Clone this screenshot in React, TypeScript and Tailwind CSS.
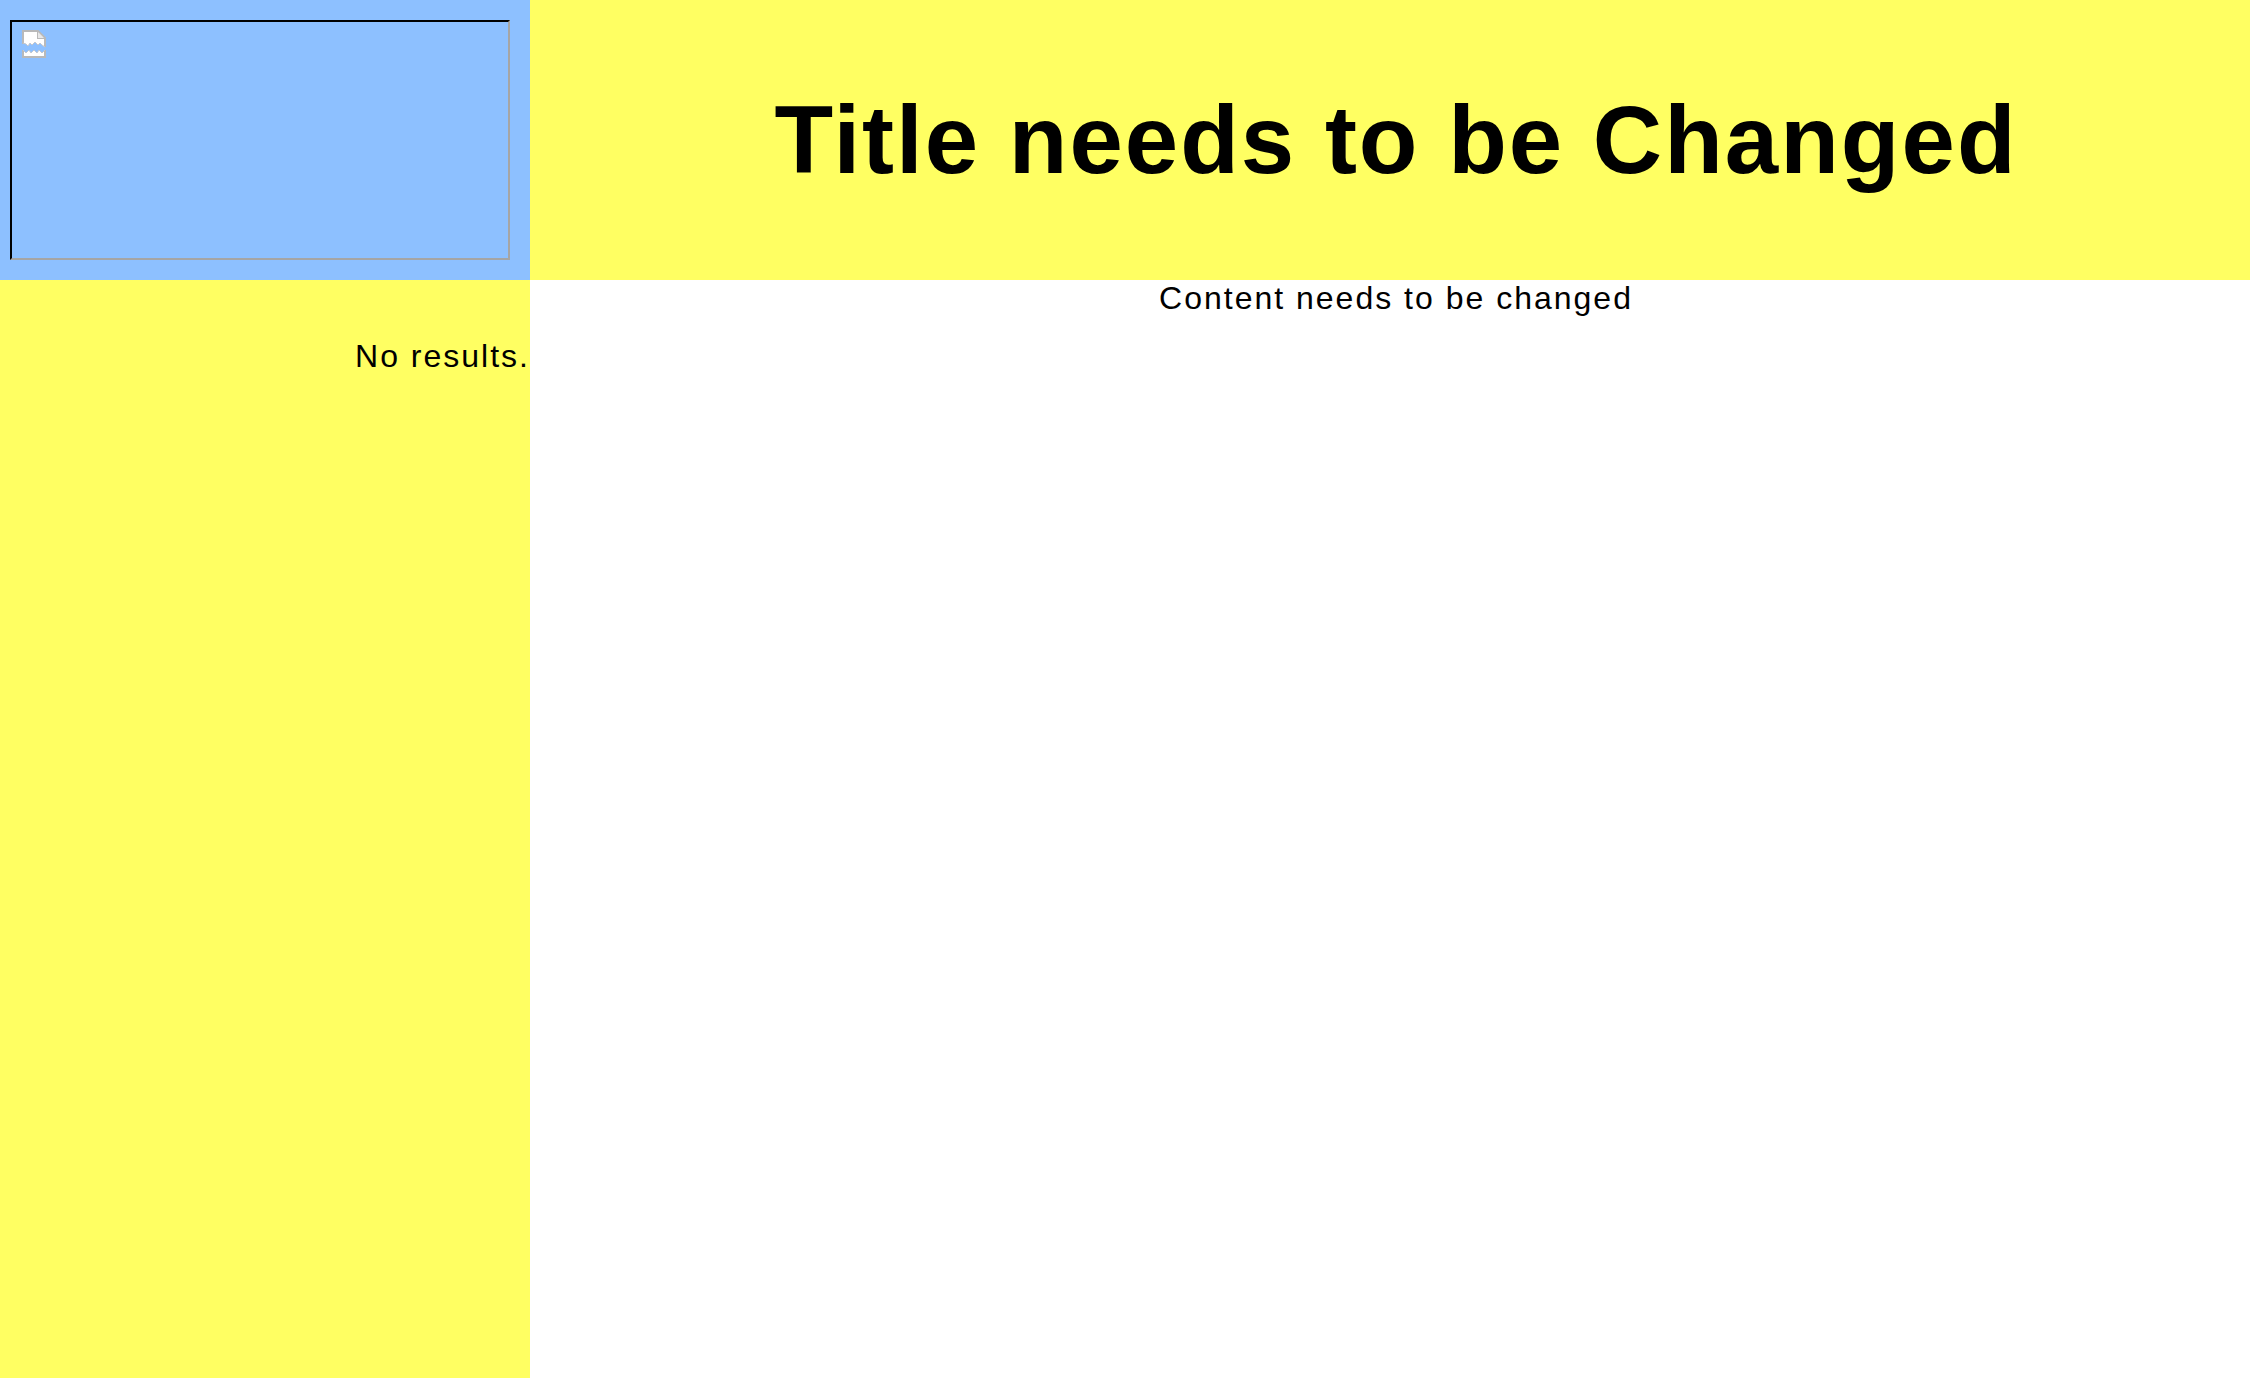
function BrokenImageIcon() {
  return (
    <svg className="h-7 w-6" viewBox="0 0 24 28" fill="none" role="img" aria-label="Image unavailable">
      <path d="M1 1H16L23 8V17L20 15L18 13L16 15L13 12L10 15L8 13L6 16L4 14L1 13Z" fill="#fff" />
      <path d="M1 14V1H16L23 8V17M16 1V8H23" stroke="#b9b9b9" strokeWidth="2" />
      <path d="M16 2L22 8H16Z" fill="#e8e8e8" />
      <path d="M1 13L4 14L6 16L8 13L10 15L13 12L16 15L18 13L20 15L23 17" stroke="#c3c8d0" strokeWidth="1" />
      <path d="M1 27V20L4 23L7 20L9 23L12 20L15 23L17 20L20 23L23 20V27Z" fill="#fff" />
      <path d="M1 20V27H23V20" stroke="#b9b9b9" strokeWidth="2" />
      <path d="M1 20L4 23L7 20L9 23L12 20L15 23L17 20L20 23L23 20" stroke="#c3c8d0" strokeWidth="1" />
    </svg>
  );
}

export default function App() {
  return (
    <div className="grid min-h-screen grid-cols-[530px_1fr] grid-rows-[auto_1fr] bg-white font-['Liberation_Sans',Arial,sans-serif] text-[32px] leading-[37px] tracking-[2px] text-black">
      <div className="bg-[#8dc0ff] py-5 pr-5 pl-2.5">
        <div className="h-60 border-2 border-t-black border-r-[#a5a5a5] border-b-[#a5a5a5] border-l-black p-2.5 pt-2">
          <BrokenImageIcon />
        </div>
      </div>
      <header className="flex items-center justify-center bg-[#ffff62] pl-3">
        <h1 className="text-center text-[96px] leading-[110px] font-bold">Title needs to be Changed</h1>
      </header>
      <aside className="bg-[#ffff62] pt-[58px] text-right">
        <p>No results.</p>
      </aside>
      <main className="pl-3 text-center">
        <p>Content needs to be changed</p>
      </main>
    </div>
  );
}
